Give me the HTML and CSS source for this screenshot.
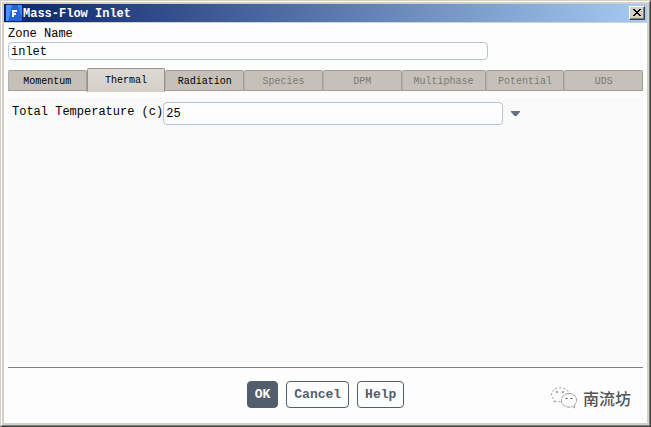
FILE: index.html
```html
<!DOCTYPE html>
<html lang="en">
<head>
    <title>Mass-Flow Inlet</title>
    <meta charset="UTF-8">
    <link rel="stylesheet" href="styles.css">
</head>
<body>
    <div class="window">
        <div class="frame">
            <header class="title-bar">
                <svg class="app-icon" viewBox="0 0 16 16" aria-hidden="true">
                    <rect width="16" height="16" fill="#3a86f4"/>
                    <path d="M2 16 L6 0 H11 L16 12 V16 Z" fill="#2464d4"/>
                    <path d="M0 0 H6 L2 16 H0 Z" fill="#4a92fa"/>
                    <path d="M6 5 H11 V7 H8 V8 H10 V10 H8 V12 H6 Z" fill="#fff"/>
                </svg>
                <h1 class="title">Mass-Flow Inlet</h1>
                <button class="close" type="button" aria-label="Close">
                    <svg viewBox="0 0 8 7" width="8" height="7" shape-rendering="crispEdges">
                        <path d="M0 0h2v1h1v1h2v-1h1v-1h2v1h-1v1h-1v1h-1v1h1v1h1v1h1v1h-2v-1h-1v-1h-2v1h-1v1h-2v-1h1v-1h1v-1h1v-1h-1v-1h-1v-1h-1z" fill="#000"/>
                    </svg>
                </button>
            </header>

            <main class="content">
                <div class="zone">
                    <label for="zoneName">Zone Name</label>
                    <input type="text" id="zoneName" class="text-box" value="inlet">
                </div>

                <div class="tabs" role="tablist">
                    <button class="tab" type="button" role="tab">Momentum</button>
                    <button class="tab active" type="button" role="tab" aria-selected="true">Thermal</button>
                    <button class="tab" type="button" role="tab">Radiation</button>
                    <button class="tab" type="button" role="tab" disabled>Species</button>
                    <button class="tab" type="button" role="tab" disabled>DPM</button>
                    <button class="tab" type="button" role="tab" disabled>Multiphase</button>
                    <button class="tab" type="button" role="tab" disabled>Potential</button>
                    <button class="tab" type="button" role="tab" disabled>UDS</button>
                </div>

                <section class="panel" role="tabpanel">
                    <div class="field">
                        <label for="temperature">Total Temperature (c)</label>
                        <input type="text" id="temperature" class="text-box" value="25">
                        <button class="menu-toggle" type="button" aria-label="Input options">
                            <svg viewBox="0 0 9 5" width="9" height="5">
                                <path d="M0 0 H9 V1 L5.500 5 H3.500 L0 1 Z" fill="#66707b"/>
                            </svg>
                        </button>
                    </div>
                </section>

                <footer class="actions">
                    <button class="action primary" type="button">OK</button>
                    <button class="action" type="button">Cancel</button>
                    <button class="action" type="button">Help</button>
                </footer>
            </main>
        </div>

        <div class="watermark">
            <svg viewBox="0 0 26 22" width="26" height="22" fill="none" stroke="#999" aria-hidden="true">
                <path d="M9.500 14.500 C7.500 14.800 6.500 14.500 5 14 L3 16 L3.500 13 C-1.500 9 0 2.500 6.500 1 C12 0 17 2.500 18 6.500" stroke-dasharray="2 2"/>
                <path d="M18 6.500 C13.500 6.500 10.500 9.500 10.500 13.500 C10.500 18.500 16 21.500 21 19.500 L24 21 L23.500 18 C27.500 14 25.500 6.500 18 6.500 Z" stroke-dasharray="4 1"/>
                <path d="M5 5h2M11 5h2M14.500 11.500h2M19.500 11.500h2" stroke="#555"/>
            </svg>
            <span>南流坊</span>
        </div>
    </div>
</body>
</html>
```

FILE: styles.css
```css
:root {
    --face: #d4d0c8;
    --bg-color: #fdfdfd;
    --panel-bg: #f9f9f9;
    --text-color: #000;
    --field-border: #b8c4d2;
    --tab-bg: #c5c1b9;
    --tab-border: #a29f98;
    --button-color: #525e6c;
}

* {
    box-sizing: border-box;
}

body {
    margin: 0;
    font-family: "Liberation Mono", "Courier New", monospace;
    font-size: 12px;
    line-height: 16px;
    color: var(--text-color);
}

button,
input {
    font: inherit;
    color: inherit;
    margin: 0;
}

.window {
    position: relative;
    display: flex;
    min-height: 100vh;
    border: 1px solid;
    border-color: var(--face) #404040 #404040 var(--face);
}

.frame {
    flex: 1;
    display: flex;
    flex-direction: column;
    padding: 2px;
    background: var(--face);
    border: 1px solid;
    border-color: #fff #808080 #808080 #fff;
}

.title-bar {
    display: flex;
    align-items: center;
    height: 18px;
    padding: 0 2px;
    margin-bottom: 1px;
    background: linear-gradient(to right, #0a246a, #a6caf0);
}

.app-icon {
    width: 16px;
    height: 16px;
}

.title {
    flex: 1;
    margin: 0 0 0 1px;
    padding-top: 2px;
    font-size: 12px;
    font-weight: bold;
    color: #fff;
}

.close {
    display: flex;
    align-items: center;
    justify-content: center;
    width: 16px;
    height: 14px;
    padding: 0 1px 1px 0;
    background: var(--face);
    border: 1px solid;
    border-color: #fff #404040 #404040 #fff;
    box-shadow: inset -1px -1px #808080;
}

.content {
    flex: 1;
    display: flex;
    flex-direction: column;
    padding: 3px 4px 0;
    background: var(--bg-color);
}

.zone {
    display: flex;
    flex-direction: column;
    max-width: 480px;
}

.text-box {
    background: var(--bg-color);
    border: 1px solid var(--field-border);
    border-radius: 4px;
    padding: 1px 2px 0;
    min-width: 0;
}

.zone .text-box {
    height: 18px;
}

.tabs {
    display: flex;
    align-items: flex-end;
    height: 24px;
    margin-top: 8px;
}

.tab {
    flex: 1 1 0;
    height: 21px;
    margin-bottom: 1px;
    padding: 3px 11px 0;
    font-size: 10px;
    background: var(--tab-bg);
    border: 1px solid var(--tab-border);
    border-left-color: #b4b0a8;
    border-radius: 2px 2px 0 0;
}

.tab:disabled {
    color: #7c7a75;
}

.tab.active {
    height: 24px;
    margin-bottom: 0;
    padding-top: 1px;
    background: linear-gradient(#dedad3, #d4d0c8);
    border-color: #96938c;
    border-bottom: none;
}

.panel {
    flex: 1;
    margin-top: 6px;
    padding: 4px;
    background: var(--panel-bg);
}

.field {
    display: flex;
    align-items: flex-start;
}

.field label {
    padding-top: 2px;
    white-space: nowrap;
}

.field .text-box {
    flex: 0 1 340px;
    height: 23px;
}

.menu-toggle {
    display: flex;
    align-items: center;
    height: 23px;
    padding: 0 8px;
    background: none;
    border: none;
}

.actions {
    display: flex;
    justify-content: center;
    gap: 8px;
    margin-top: 4px;
    padding: 13px 0 15px;
    border-top: 1px solid #808080;
}

.action {
    height: 27px;
    padding: 1px 7px 0;
    font-size: 13px;
    font-weight: bold;
    color: var(--button-color);
    background: var(--bg-color);
    border: 1px solid var(--button-color);
    border-radius: 4px;
}

.action.primary {
    color: #fff;
    background: var(--button-color);
}

/* Sits over the bottom right corner of the dialog */
.watermark {
    position: absolute;
    right: 19px;
    bottom: 16px;
    display: flex;
    align-items: center;
    gap: 6px;
    font-family: "Noto Sans CJK SC", sans-serif;
    font-size: 16px;
    font-weight: 500;
    line-height: 24px;
    color: #555;
}
```
